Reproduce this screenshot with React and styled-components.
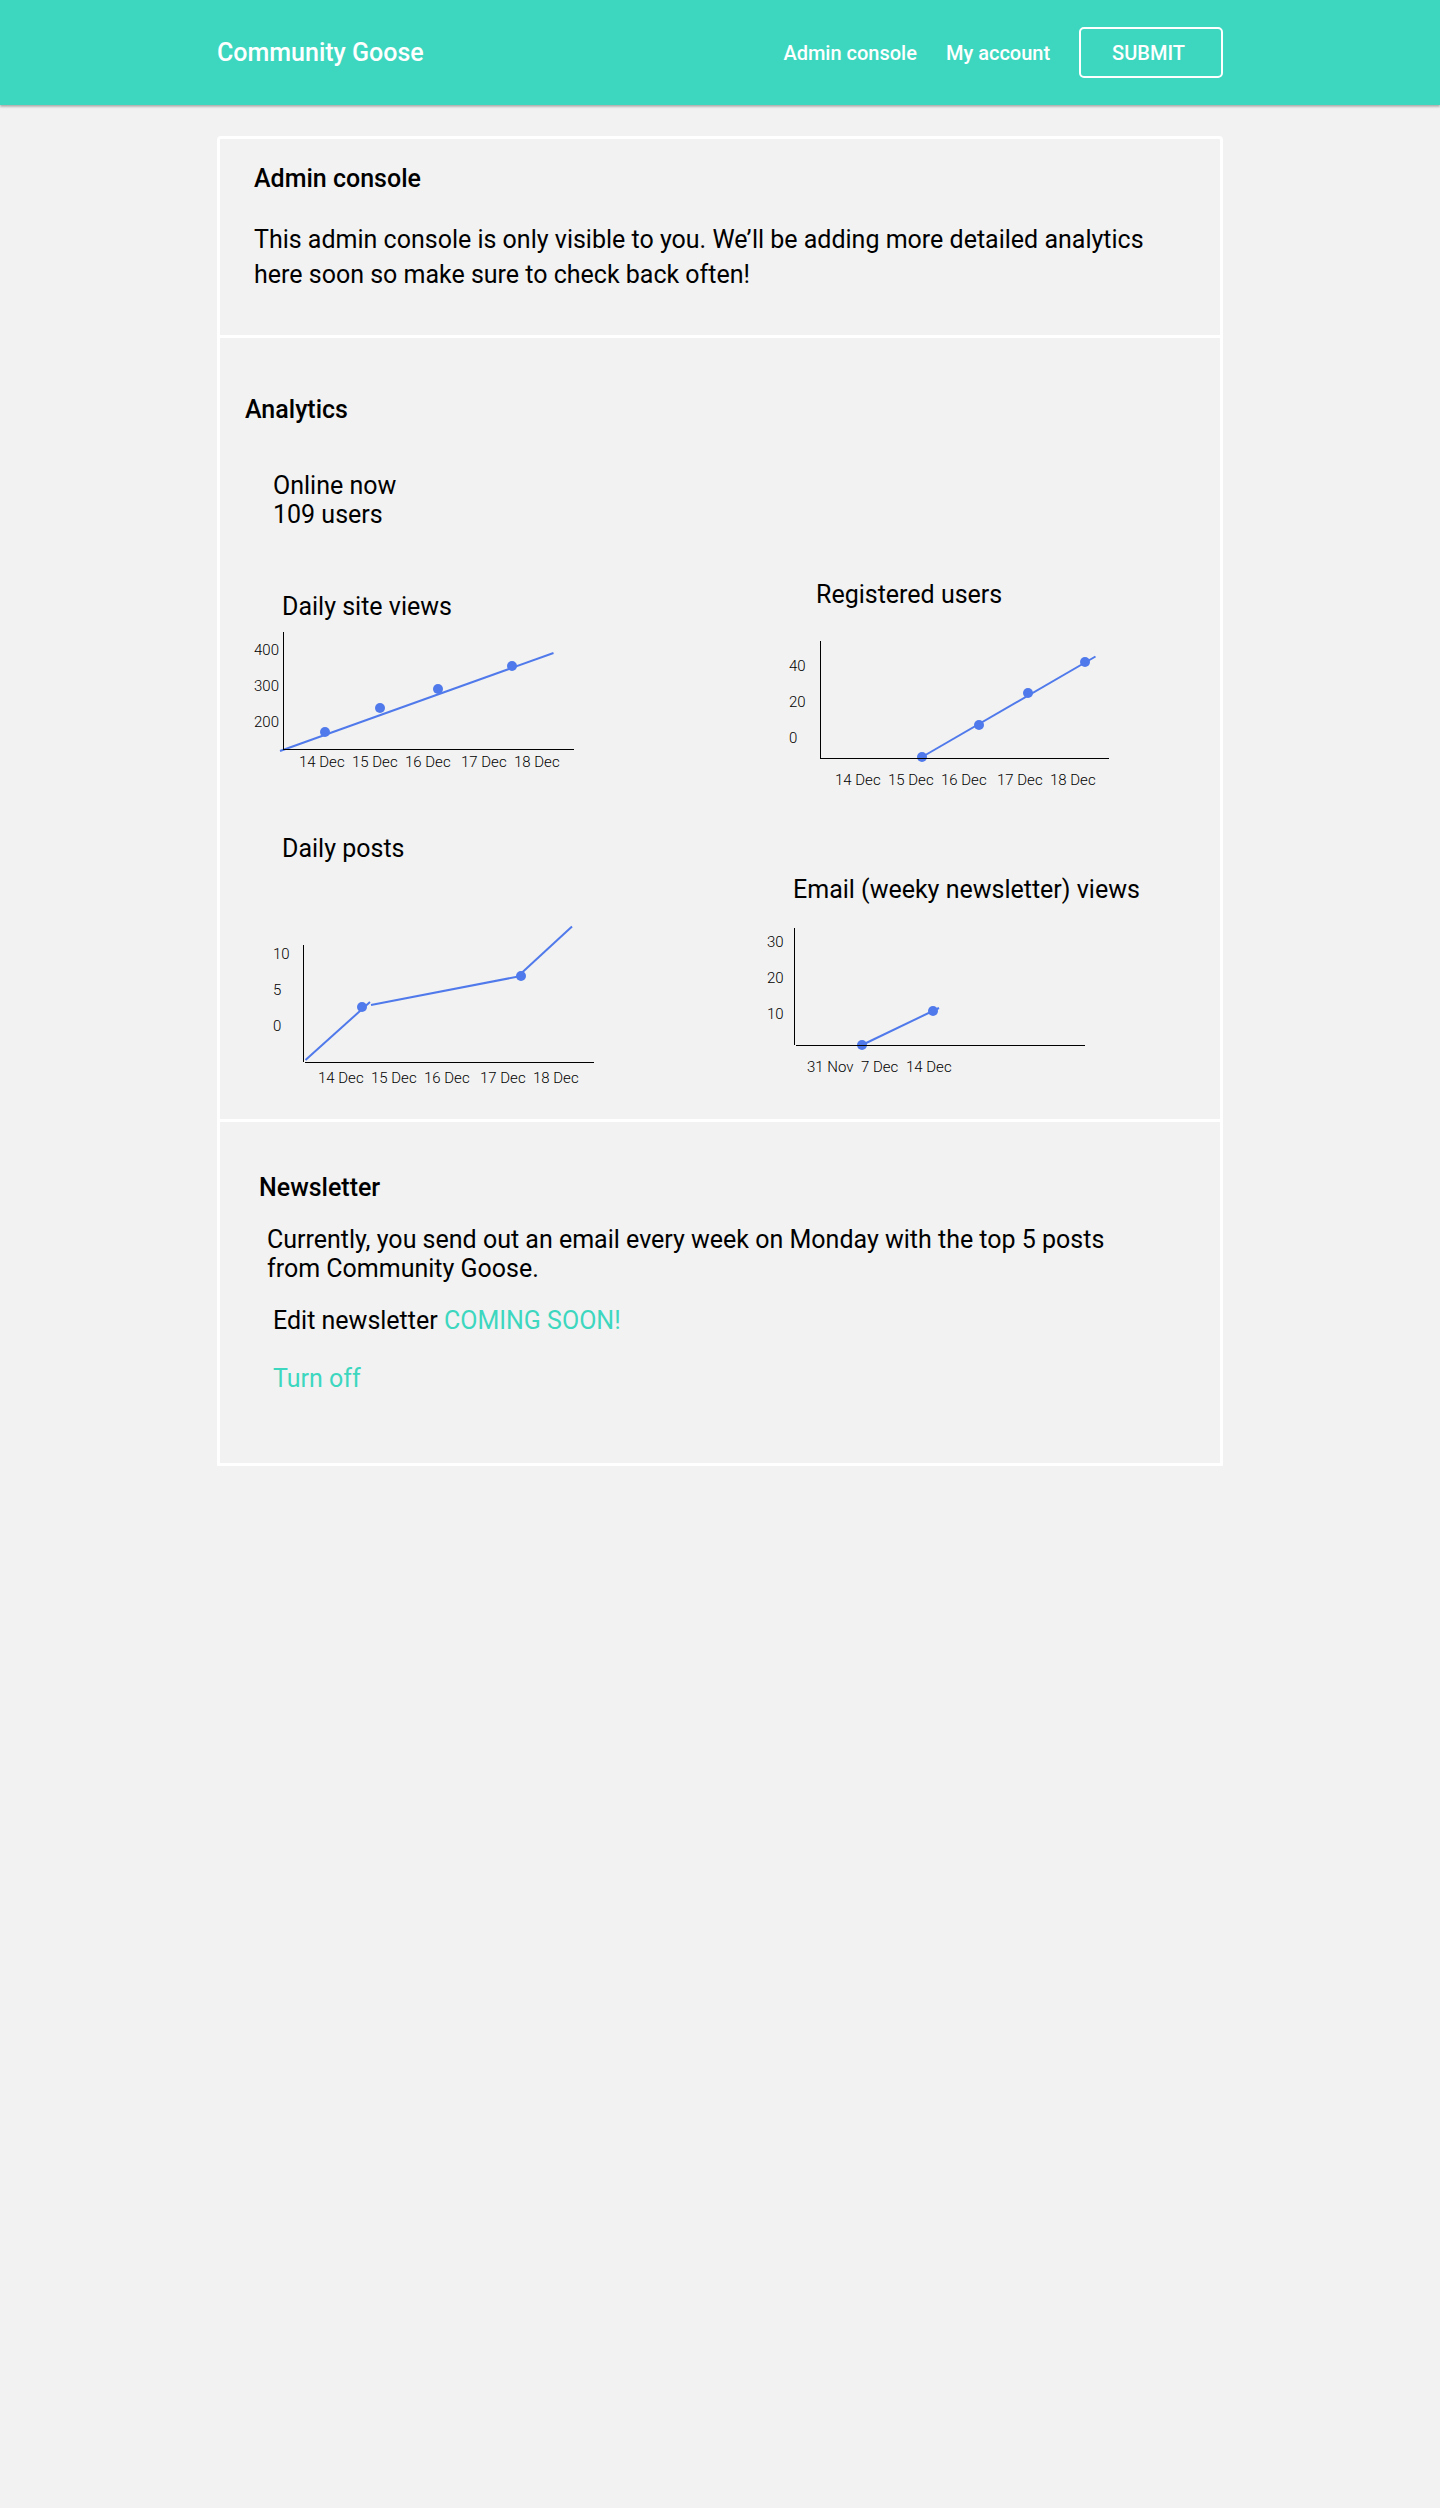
import React from "react";
import styled, { createGlobalStyle } from "styled-components";

const teal = "#3dd7bf";
const blue = "#507aeb";

const GlobalStyle = createGlobalStyle`
  *, *::before, *::after { box-sizing: border-box; }
  body {
    margin: 0;
    background: #f2f2f2;
    color: #000;
    font: 400 25px/29px Roboto, "Liberation Sans", sans-serif;
  }
  h1, h2, h3, p, figure { margin: 0; font: inherit; }
`;

const Header = styled.header`
  background: ${teal};
  box-shadow: 0 2px 2px rgba(0, 0, 0, 0.24), 0 0 2px rgba(0, 0, 0, 0.12);
  color: #fff;
`;

const HeaderInner = styled.div`
  display: flex;
  flex-wrap: wrap;
  align-items: center;
  justify-content: space-between;
  max-width: 1006px;
  min-height: 105px;
  margin: 0 auto;
`;

const Brand = styled.a`
  color: inherit;
  font-weight: 500;
  text-decoration: none;
`;

const Nav = styled.nav`
  display: flex;
  align-items: center;
  gap: 29px;
  font-size: 20px;
  line-height: 24px;
`;

const NavLink = styled.a`
  color: inherit;
  font-weight: 500;
  text-decoration: none;
`;

const SubmitButton = styled.button`
  height: 51px;
  padding: 0 36px 0 31px;
  border: 2px solid #fff;
  border-radius: 5px;
  background: transparent;
  color: inherit;
  font: inherit;
  font-weight: 500;
  cursor: pointer;
`;

const Panel = styled.main`
  max-width: 1006px;
  margin: 31px auto 0;
  border: 3px solid #fff;
  border-radius: 4px 4px 0 0;
`;

const Section = styled.section`
  padding: ${(p) => p.$padding};

  & + & {
    border-top: 3px solid #fff;
  }
`;

const Heading = styled.h2`
  && {
    font-weight: 500;
  }
`;

const Intro = styled.p`
  && {
    margin-top: 29px;
    line-height: 35px;
  }
`;

const Online = styled.div`
  margin: 47px 0 0 28px;
`;

const ChartGrid = styled.div`
  display: grid;
  grid-template-columns: minmax(0, 8fr) minmax(0, 7fr);
  margin: 51px 0 0 8px;

  @media (max-width: 900px) {
    grid-template-columns: minmax(0, 1fr);
  }
`;

const ChartColumn = styled.div`
  display: flex;
  flex-direction: column;
  gap: 57px;
  padding-top: ${(p) => p.$top}px;
`;

const ChartTitle = styled.figcaption`
  padding-left: ${(p) => p.$indent}px;
`;

const Plot = styled.svg`
  display: block;
  max-width: 100%;
  overflow: visible;

  text {
    font-size: 15px;
    font-weight: 300;
  }
`;

const Schedule = styled.p`
  && {
    max-width: 860px;
    margin: 23px 0 0 8px;
  }
`;

const Actions = styled.div`
  display: flex;
  flex-direction: column;
  align-items: flex-start;
  gap: 29px;
  margin: 23px 0 0 14px;
`;

const Accent = styled.span`
  color: ${teal};
`;

const TextButton = styled.button`
  padding: 0;
  border: 0;
  background: none;
  color: ${teal};
  font: inherit;
  cursor: pointer;
`;

const fiveDays = ["14 Dec", "15 Dec", "16 Dec", "17 Dec", "18 Dec"];
const dayOffsets = [0, 53, 106, 162, 215];

/* Coordinates are in pixels, measured from the top left of each plot. */
const siteViews = {
  title: "Daily site views",
  indent: 29,
  height: 156,
  yTicks: { x: 1, y: 34, labels: ["400", "300", "200"] },
  xTicks: { x: 46, y: 146, labels: fiveDays, offsets: dayOffsets },
  yAxis: [30.5, 11, 128],
  xAxis: [128.5, 30, 321],
  lines: [[27, 130, 300.5, 32]],
  dots: [[72, 111], [127, 87], [185, 68], [259, 45]],
};

const posts = {
  title: "Daily posts",
  indent: 29,
  height: 227,
  yTicks: { x: 20, y: 96, labels: ["10", "5", "0"] },
  xTicks: { x: 65, y: 220, labels: fiveDays, offsets: dayOffsets },
  yAxis: [50.5, 82, 199],
  xAxis: [199.5, 52, 341],
  lines: [[52.5, 197, 117, 139], [118, 142, 268, 113], [268, 110.5, 319, 63.5]],
  dots: [[109, 144], [268, 113]],
};

const registered = {
  title: "Registered users",
  indent: 51,
  height: 209,
  yTicks: { x: 24, y: 62, labels: ["40", "20", "0"] },
  xTicks: { x: 70, y: 176, labels: fiveDays, offsets: dayOffsets },
  yAxis: [55.5, 32, 149],
  xAxis: [149.5, 55, 344],
  lines: [[157, 148, 330.5, 47.5]],
  dots: [[157, 148], [214, 116], [263, 84], [320, 53]],
};

const emailViews = {
  title: "Email (weeky newsletter) views",
  indent: 28,
  height: 176,
  yTicks: { x: 2, y: 43, labels: ["30", "20", "10"] },
  xTicks: { x: 42, y: 168, labels: ["31 Nov", "7 Dec", "14 Dec"], offsets: [0, 54, 99] },
  yAxis: [29.5, 24, 141],
  xAxis: [141.5, 31, 320],
  lines: [[97, 141, 174, 104]],
  dots: [[97, 141], [168, 107]],
};

function Chart({ data }) {
  const { title, indent, height, yTicks, xTicks, yAxis, xAxis, lines, dots } = data;
  return (
    <figure>
      <ChartTitle $indent={indent}>{title}</ChartTitle>
      <Plot width="350" height={height} viewBox={`0 0 350 ${height}`} role="img" aria-label={title}>
        {lines.map(([x1, y1, x2, y2]) => (
          <line key={x1} x1={x1} y1={y1} x2={x2} y2={y2} stroke={blue} strokeWidth="2" />
        ))}
        {dots.map(([cx, cy]) => (
          <circle key={cx} cx={cx} cy={cy} r="5" fill={blue} />
        ))}
        <line x1={yAxis[0]} x2={yAxis[0]} y1={yAxis[1]} y2={yAxis[2]} stroke="#000" />
        <line x1={xAxis[1]} x2={xAxis[2]} y1={xAxis[0]} y2={xAxis[0]} stroke="#000" />
        {yTicks.labels.map((label, i) => (
          <text key={label} x={yTicks.x} y={yTicks.y + i * 36}>{label}</text>
        ))}
        {xTicks.labels.map((label, i) => (
          <text key={label} x={xTicks.x + xTicks.offsets[i]} y={xTicks.y}>{label}</text>
        ))}
      </Plot>
    </figure>
  );
}

export default function App() {
  return (
    <>
      <GlobalStyle />
      <Header>
        <HeaderInner>
          <Brand href="#">Community Goose</Brand>
          <Nav>
            <NavLink href="#admin">Admin console</NavLink>
            <NavLink href="#account">My account</NavLink>
            <SubmitButton type="button">SUBMIT</SubmitButton>
          </Nav>
        </HeaderInner>
      </Header>
      <Panel>
        <Section $padding="25px 34px 43px">
          <Heading>Admin console</Heading>
          <Intro>
            This admin console is only visible to you. We’ll be adding more detailed analytics here
            soon so make sure to check back often!
          </Intro>
        </Section>
        <Section $padding="57px 7px 29px 25px">
          <Heading>Analytics</Heading>
          <Online>
            <p>Online now</p>
            <p>109 users</p>
          </Online>
          <ChartGrid>
            <ChartColumn $top={12}>
              <Chart data={siteViews} />
              <Chart data={posts} />
            </ChartColumn>
            <ChartColumn $top={0}>
              <Chart data={registered} />
              <Chart data={emailViews} />
            </ChartColumn>
          </ChartGrid>
        </Section>
        <Section $padding="51px 39px 70px">
          <Heading>Newsletter</Heading>
          <Schedule>
            Currently, you send out an email every week on Monday with the top 5 posts from
            Community Goose.
          </Schedule>
          <Actions>
            <p>
              Edit newsletter <Accent>COMING SOON!</Accent>
            </p>
            <TextButton type="button">Turn off</TextButton>
          </Actions>
        </Section>
      </Panel>
    </>
  );
}
